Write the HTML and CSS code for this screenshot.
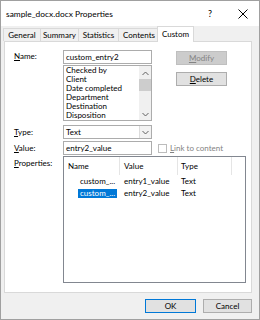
FILE: index.html
```html
<!DOCTYPE html>
<html lang="en">
<head>
  <meta charset="UTF-8">
  <title>sample_docx.docx Properties</title>
  <link rel="stylesheet" href="styles.css">
</head>
<body>
<div class="window">
  <div class="titlebar">
    <span class="title">sample_docx.docx Properties</span>
    <span class="help">?</span>
    <svg class="close" width="10" height="10" viewBox="0 0 10 10"><path d="M0.5 0.5 L9.5 9.5 M9.5 0.5 L0.5 9.5" stroke="#000" stroke-width="1"/></svg>
  </div>

  <div class="tabs">
    <div class="tab w-general">General</div>
    <div class="tab w-summary">Summary</div>
    <div class="tab w-stats">Statistics</div>
    <div class="tab w-contents">Contents</div>
    <div class="tab active">Custom</div>
  </div>

  <div class="panel">
    <div class="top">
      <div class="label lbl-name"><u>N</u>ame:</div>
      <div class="namecol">
        <div class="field">custom_entry2</div>
        <div class="listbox">
          <ul>
            <li>Checked by</li>
            <li>Client</li>
            <li>Date completed</li>
            <li>Department</li>
            <li>Destination</li>
            <li>Disposition</li>
          </ul>
          <div class="scroll">
            <svg width="7" height="5" viewBox="0 0 7 5"><path d="M0.5 4 L3.5 1 L6.5 4" fill="none" stroke="#606060"/></svg>
            <div class="thumb"></div>
            <div class="track"></div>
            <svg width="7" height="5" viewBox="0 0 7 5"><path d="M0.5 1 L3.5 4 L6.5 1" fill="none" stroke="#606060"/></svg>
          </div>
        </div>
      </div>
      <div class="btncol">
        <div class="btn disabled"><u>M</u>odify</div>
        <div class="btn"><u>D</u>elete</div>
      </div>
    </div>

    <div class="row row-type">
      <div class="label"><u>T</u>ype:</div>
      <div class="combo">
        <span>Text</span>
        <div class="drop">
          <svg width="7" height="5" viewBox="0 0 7 5"><path d="M0.5 1 L3.5 4 L6.5 1" fill="none" stroke="#606060"/></svg>
        </div>
      </div>
    </div>

    <div class="row row-value">
      <div class="label"><u>V</u>alue:</div>
      <div class="field short">entry2_value</div>
      <div class="check"></div>
      <span class="muted"><u>L</u>ink to content</span>
    </div>

    <div class="row row-props">
      <div class="label lbl-props"><u>P</u>roperties:</div>
      <div class="listview">
        <div class="lv-head">
          <div class="c-name">Name</div>
          <div class="c-value">Value</div>
          <div class="c-type">Type</div>
          <div class="c-rest"></div>
        </div>
        <div class="lv-row">
          <div class="c-name"><span>custom_...</span></div>
          <div class="c-value">entry1_value</div>
          <div class="c-type">Text</div>
        </div>
        <div class="lv-row selected">
          <div class="c-name"><span>custom_...</span></div>
          <div class="c-value">entry2_value</div>
          <div class="c-type">Text</div>
        </div>
      </div>
    </div>
  </div>

  <div class="footer">
    <div class="btn ok">OK</div>
    <div class="btn cancel">Cancel</div>
  </div>
</div>
</body>
</html>
```

FILE: styles.css
```css
body {
  margin: 0;
  font-family: Lato, "Noto Sans", sans-serif;
  font-size: 8px;
  color: #000;
}
.window {
  width: 260px;
  height: 320px;
  box-sizing: border-box;
  border: 1px solid #a0a0a0;
  background: #f0f0f0;
}
.titlebar {
  height: 25px;
  background: #fff;
  display: flex;
  align-items: center;
  padding-left: 5px;
}
.title {
  font-size: 8.4px;
  flex: 1;
}
.help {
  font-size: 9px;
  margin-right: 26px;
}
.close {
  margin-right: 11px;
}
.tabs {
  display: flex;
  align-items: flex-end;
  height: 15px;
  padding-left: 2px;
}
.tab {
  box-sizing: border-box;
  height: 13px;
  line-height: 13px;
  border: 1px solid #d9d9d9;
  border-bottom: none;
  text-align: center;
  margin-left: -1px;
  white-space: nowrap;
}
.tab:first-child {
  margin-left: 0;
}
.w-general { width: 38px; }
.w-summary { width: 39px; }
.w-stats { width: 41px; }
.w-contents { width: 42px; }
.tab.active {
  width: 37px;
  height: 16px;
  line-height: 15px;
  margin-left: -3px;
  margin-bottom: -1px;
  background: #fff;
  position: relative;
  z-index: 1;
}
.panel {
  margin-left: 3px;
  width: 248px;
  height: 252px;
  box-sizing: border-box;
  border: 1px solid #d9d9d9;
  background: #fff;
  padding: 8px 0 0 9px;
}
.top {
  display: flex;
}
.label {
  width: 49px;
  flex: none;
}
.lbl-name {
  padding-top: 1px;
}
.namecol {
  width: 89px;
}
.field {
  box-sizing: border-box;
  height: 14px;
  border: 1px solid #acacac;
  padding-left: 2px;
  line-height: 12px;
}
.field.short {
  width: 89px;
}
.listbox {
  margin-top: 1px;
  height: 56px;
  box-sizing: border-box;
  border: 1px solid #acacac;
  display: flex;
  overflow: hidden;
}
.listbox ul {
  list-style: none;
  margin: 0;
  padding: 0 0 0 2px;
  flex: 1;
}
.listbox li {
  height: 9px;
  line-height: 9px;
}
.scroll {
  width: 12px;
  background: #f0f0f0;
  display: flex;
  flex-direction: column;
  align-items: center;
  padding: 5px 0 3px;
}
.thumb {
  width: 12px;
  height: 12px;
  background: #cdcdcd;
  margin-top: 3px;
}
.track {
  flex: 1;
}
.btncol {
  margin-left: 24px;
  padding-top: 1px;
}
.btn {
  box-sizing: border-box;
  width: 51px;
  height: 14px;
  line-height: 12px;
  text-align: center;
  border: 1px solid #adadad;
  background: #e1e1e1;
  margin-bottom: 7px;
}
.btn.disabled {
  background: #cccccc;
  border-color: #bfbfbf;
  color: #838383;
}
.row {
  display: flex;
  align-items: center;
}
.row-type {
  margin-top: 4px;
}
.combo {
  box-sizing: border-box;
  width: 89px;
  height: 14px;
  border: 1px solid #acacac;
  display: flex;
  align-items: center;
  padding-left: 2px;
}
.combo span {
  flex: 1;
}
.drop {
  width: 12px;
  height: 12px;
  box-sizing: border-box;
  border-left: 1px solid #dcdcdc;
  background: #f2f2f2;
  display: flex;
  align-items: center;
  justify-content: center;
}
.row-value {
  margin-top: 2px;
}
.check {
  width: 9px;
  height: 9px;
  box-sizing: border-box;
  border: 1px solid #bcbcbc;
  background: #fff;
  margin: 0 3px 0 6px;
}
.muted {
  color: #838383;
}
.row-props {
  align-items: flex-start;
  margin-top: 1px;
}
.lbl-props {
  padding-top: 2px;
}
.listview {
  width: 183px;
  height: 127px;
  box-sizing: border-box;
  border: 1px solid #828790;
}
.lv-head, .lv-row {
  display: flex;
}
.lv-head {
  height: 18px;
  line-height: 18px;
}
.lv-head > div {
  border-right: 1px solid #e5e5e5;
  box-sizing: border-box;
}
.lv-head .c-rest {
  border-right: none;
  flex: 1;
}
.c-name {
  width: 56px;
  padding-left: 4px;
  box-sizing: border-box;
  white-space: nowrap;
}
.c-value {
  width: 58px;
  padding-left: 4px;
  box-sizing: border-box;
}
.c-type {
  width: 54px;
  padding-left: 3px;
  box-sizing: border-box;
}
.lv-row {
  height: 12px;
  line-height: 12px;
}
.lv-row .c-name {
  padding-left: 14px;
}
.lv-row .c-name span {
  display: inline-block;
  padding: 0 2px;
  line-height: 9px;
}
.lv-row.selected .c-name span {
  background: #0078d7;
  color: #fff;
}
.footer {
  display: flex;
  justify-content: flex-end;
  gap: 7px;
  padding: 6px 7px 0 0;
}
.footer .btn {
  margin-bottom: 0;
  width: 49px;
}
.btn.ok {
  width: 51px;
  border-color: #0078d7;
}
```
